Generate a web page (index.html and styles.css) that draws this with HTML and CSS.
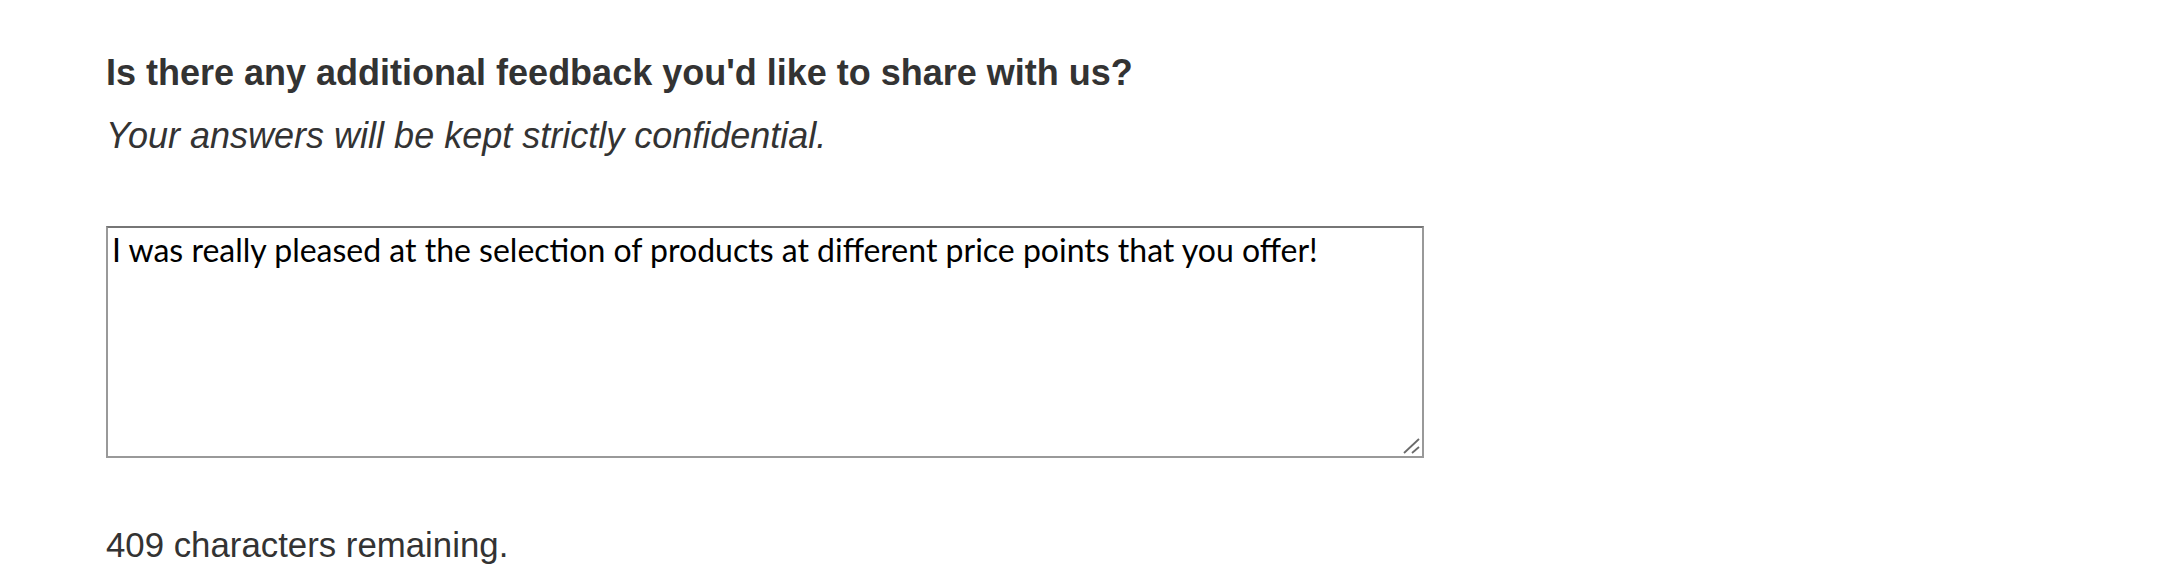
FILE: index.html
```html
<!DOCTYPE html>
<html lang="en">
<head>
<meta charset="utf-8">
<title>Feedback</title>
<link rel="stylesheet" href="styles.css">
</head>
<body>
<main class="survey">
  <h1 class="question">Is there any additional feedback you'd like to share with us?</h1>
  <p class="note">Your answers will be kept strictly confidential.</p>
  <div class="field">
    <textarea class="answer">I was really pleased at the selection of products at different price points that you offer!</textarea>
    <svg class="grip" width="18" height="18" viewBox="0 0 18 18" aria-hidden="true">
      <line x1="1" y1="16" x2="16" y2="2" stroke="#6a6a6a" stroke-width="1.8"/>
      <line x1="9" y1="16" x2="16" y2="10" stroke="#6a6a6a" stroke-width="1.8"/>
    </svg>
  </div>
  <p class="counter">409 characters remaining.</p>
</main>
</body>
</html>
```

FILE: styles.css
```css
html, body {
  margin: 0;
  padding: 0;
  background: #ffffff;
}

.survey {
  padding: 53px 0 0 106px;
  font-family: "Liberation Sans", Arial, Helvetica, sans-serif;
  color: #333333;
}

.question {
  margin: 0;
  font-size: 36px;
  font-weight: bold;
  line-height: 40px;
}

.note {
  margin: 23px 0 0 0;
  font-size: 36px;
  font-style: italic;
  line-height: 40px;
}

.field {
  position: relative;
  width: 1318px;
  height: 232px;
  margin-top: 70px;
}

.answer {
  display: block;
  box-sizing: border-box;
  width: 100%;
  height: 100%;
  margin: 0;
  padding: 3px 4px;
  border-style: solid;
  border-width: 2px;
  border-color: #767676 #999999 #999999 #999999;
  border-radius: 0;
  background: #ffffff;
  color: #000000;
  font-family: Lato, "Liberation Sans", sans-serif;
  font-size: 32px;
  line-height: 1.2;
  resize: none;
  outline: none;
}

.grip {
  position: absolute;
  right: 3px;
  bottom: 3px;
}

.counter {
  margin: 67px 0 0 0;
  font-size: 34.8px;
  line-height: 40px;
}
```
